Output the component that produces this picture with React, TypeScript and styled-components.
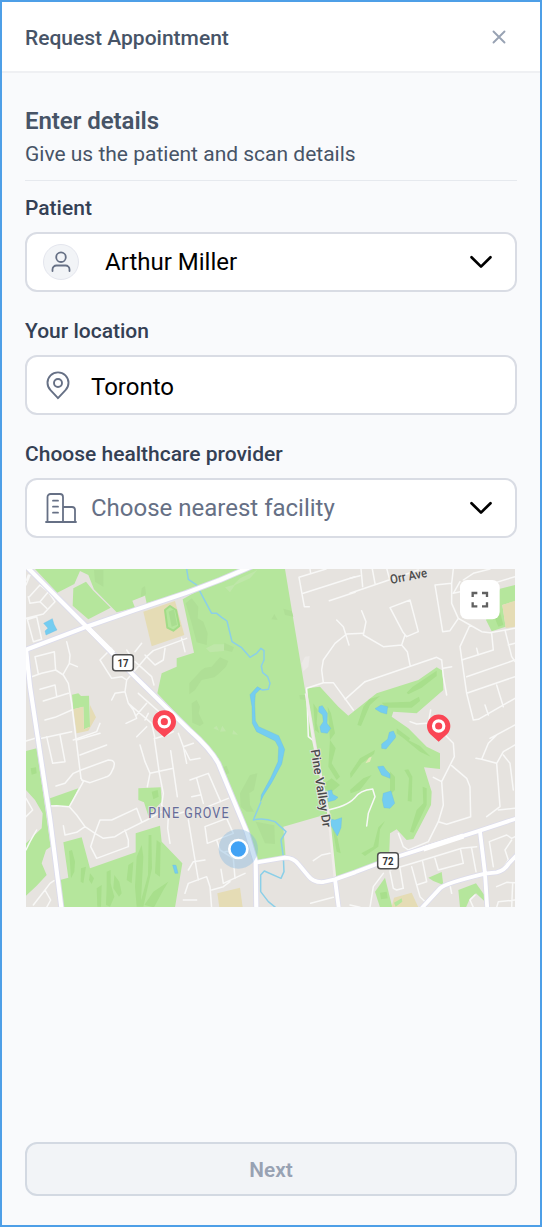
import React from 'react';
import styled, { createGlobalStyle } from 'styled-components';

const GlobalStyle = createGlobalStyle`
  * { box-sizing: border-box; }
  body { margin: 0; font-family: Roboto, "Liberation Sans", sans-serif; }
`;

const Dialog = styled.main`
  display: flex;
  flex-direction: column;
  width: 542px;
  height: 1227px;
  border: 2px solid #4e9fe7;
  background: #f9fafc;
`;

const Header = styled.header`
  display: flex;
  align-items: center;
  justify-content: space-between;
  height: 71px;
  padding: 1px 34px 0 23px;
  border-bottom: 2px solid #eff0f3;
  background: #fff;
`;

const Title = styled.h1`
  margin: 1px 0 0;
  font-size: 21px;
  line-height: 24px;
  font-weight: 500;
  color: #475467;
`;

const IconButton = styled.button`
  display: flex;
  padding: 0;
  border: 0;
  background: none;
`;

const Body = styled.section`
  display: flex;
  flex: 1;
  flex-direction: column;
  padding: 34px 23px 29px;
`;

const Intro = styled.div`
  height: 74px;
  border-bottom: 1px solid #e6e9ee;
`;

const Heading = styled.h2`
  margin: 0;
  font-size: 24px;
  line-height: 28px;
  font-weight: 600;
  letter-spacing: -0.05px;
  color: #475467;
`;

const Lead = styled.p`
  margin: 6px 0 0;
  font-size: 21px;
  line-height: 26px;
  color: #475467;
`;

const Form = styled.form`
  display: flex;
  flex-direction: column;
  gap: 27px;
  margin-top: 15px;
`;

const FieldGroup = styled.div`
  display: flex;
  flex-direction: column;
  gap: 12px;
`;

const Label = styled.span`
  font-size: 21px;
  line-height: 24px;
  font-weight: 500;
  color: #344054;
`;

const Field = styled.div`
  display: flex;
  align-items: center;
  height: 60px;
  padding: 0 22px 0 16px;
  border: 2px solid #d9dce4;
  border-radius: 12px;
  background: #fff;
`;

const Avatar = styled.span`
  display: flex;
  align-items: center;
  justify-content: center;
  width: 36px;
  height: 36px;
  border: 1px solid #e4e6ee;
  border-radius: 50%;
  background: #f2f4f7;
`;

const IconSlot = styled.span<{ $inset: number; $width: number; $drop?: number }>`
  display: flex;
  width: ${(p) => p.$width}px;
  padding-left: ${(p) => p.$inset}px;
  padding-top: ${(p) => p.$drop ?? 0}px;
`;

const Value = styled.span<{ $gap: number; $muted?: boolean; $drop?: number }>`
  flex: 1;
  margin-left: ${(p) => p.$gap}px;
  padding-top: ${(p) => p.$drop ?? 0}px;
  font-size: 24px;
  line-height: 30px;
  color: ${(p) => (p.$muted ? '#667085' : '#000')};
`;

const MapFrame = styled.div`
  width: 489px;
  height: 338px;
  margin: 31px 0 0 1px;
  svg { display: block; overflow: visible; }
`;

const NextButton = styled.button`
  height: 54px;
  margin-top: auto;
  padding: 1px 0 0;
  border: 2px solid #d3d9e2;
  border-radius: 12px;
  background: #f2f4f7;
  font: 600 20.8px/24px Roboto, "Liberation Sans", sans-serif;
  color: #98a2b3;
`;

const Chevron = () => (
  <svg width="24" height="16" viewBox="0 0 24 16" fill="none" stroke="#000" strokeWidth="2.7" strokeLinecap="round" strokeLinejoin="round">
    <path d="M2.500 3.200 12 12.600l9.500-9.400" />
  </svg>
);

const PersonIcon = () => (
  <svg width="20" height="22" viewBox="0 0 20 22" fill="none" stroke="#667085" strokeWidth="1.800" strokeLinecap="round">
    <circle cx="10" cy="6.200" r="4.800" />
    <path d="M1.500 20v-1.500a4 4 0 0 1 4-4h9a4 4 0 0 1 4 4V20" />
  </svg>
);

const PinIcon = () => (
  <svg width="24" height="30" viewBox="0 0 24 30" fill="none" stroke="#667085" strokeWidth="1.900">
    <path d="M12 27.200 4.500 19.200A10.500 10.500 0 1 1 19.500 19.200Z" strokeLinejoin="round" />
    <circle cx="12" cy="12" r="4" />
  </svg>
);

const BuildingIcon = () => (
  <svg width="32" height="32" viewBox="0 0 32 32" fill="none" stroke="#667085" strokeWidth="1.800" strokeLinecap="round">
    <path d="M1 30h30M2.500 30V5a3 3 0 0 1 3-3h9.500a3 3 0 0 1 3 3v25M18 15h9a3 3 0 0 1 3 3v12M8 8.700h5M8 14.700h5M8 20.700h5" />
  </svg>
);

/* Map geometry, three units to a pixel */
const grass = [
  'M45 27 112 98 163 72 180 33 205 45 222 88 290 157 345 143 337 122 375 107 380 130 510 90 685 27Z',
  'M160 85 198 65 220 92 272 143 205 178 158 137Z',
  'M488 118 600 55 685 27H795L880 540 930 760 790 800 797 893 707 906 675 815 595 595 510 505 412 400 425 340 470 320 470 295 522 278 495 150Z',
  'M860 385 900 380 955 440 985 467 1070 400 1195 360 1250 322 1268 332 1270 390 1190 460 1120 455 1115 470 1165 505 1220 560 1260 580V627L1212 622 1235 695 1233 735 1180 837 1160 840 1130 808 1110 820 1107 900 990 937 945 950 925 757Z',
  'M1398 180 1440 86 1485 75V124L1447 135 1457 200 1415 214Z',
  'M156 404 175 400 183 408 207 407 210 500 192 508 190 440 160 448Z',
  'M18 573 50 565 92 860 78 870 65 910 80 945 50 977 18 1007V850L65 805 68 760 45 720 18 690Z',
  'M90 715 175 685 148 740 90 737Z',
  'M355 685 422 682 425 725 385 768 372 727 355 720Z',
  'M130 847 185 832 210 925 347 877V820L420 797 425 845 487 910 465 1042H130L120 960 145 953Z',
  'M1225 953 1265 936 1270 975 1240 963Z',
  'M1315 990 1368 970 1395 1008 1400 1030 1368 1000 1350 1015 1338 1042H1320Z',
  'M1095 953 1065 995 1080 1042H1117Z',
];
const sand = [
  'M370 155 465 123 493 225 395 259Z',
  'M160 448 190 440 192 508 210 500V435L228 472 205 512 170 520Z',
  'M1447 135 1485 122V200L1457 204Z',
  'M592 1000 660 983 668 1042H598Z',
  'M1122 1013 1175 998 1195 1042H1115Z',
];
const shade = [
  'M497 130 515 115 535 140 533 175 550 185 563 220 560 255 530 247 515 190Z',
  'M508 370 545 330 555 323 575 320 600 292 625 303 618 320 595 342 583 352 545 360 525 390 508 403Z',
  'M515 430 530 420 540 440 536 460 551 490 540 498 517 488Z',
  'M613 248 642 262 636 276 612 270ZM754 178 763 162 773 180ZM790 146 815 153 820 170 795 165ZM838 405H855L858 420 840 418Z',
  'M660 700 690 645 712 640 702 690 688 700 690 735 702 755 680 755 662 740Z',
  'M707 785 763 796 765 852 735 850Z',
  'M606 623 620 617 628 640 610 645Z',
  'M222 30H250V80L225 65ZM365 85 375 78 378 103 362 112Z',
];
const fairways = [
  'M1160 398 1178 380 1250 332 1250 348 1205 383 1165 403Z',
  'M1012 495 1030 440 1048 417 1080 408 1050 435 1023 498Z',
  'M1085 428 1170 425 1197 410 1200 423 1175 443 1100 443Z',
  'M1130 505 1170 535 1165 545 1130 520ZM1145 530 1200 558 1232 590 1200 575Z',
  'M990 640 1020 595 1065 570 1062 582 1025 610 992 655ZM990 690 1030 655 1055 645 1020 690 992 700Z',
  'M1153 630 1165 628 1177 650 1175 725 1163 723 1167 655Z',
  'M1208 680 1220 685 1220 735 1180 818 1170 815 1190 750 1210 730Z',
  'M1024 880 1060 860 1075 802 1095 783 1080 808 1075 860 1035 888Z',
  'M880 430 893 450 890 490 898 520 885 510ZM923 440 933 460 945 520 930 540 927 500Z',
  'M1110 635 1125 650 1125 690 1110 705Z',
  'M930 540 947 565 935 610 960 650 950 660 925 620ZM905 675 935 655 960 675 930 700Z',
  'M938 805 952 830 962 880 950 875Z',
  'M147 873 156 870 165 905 163 935 153 955 150 910ZM183 925 198 920 190 970 182 965Z',
  'M210 940 222 955 215 972 207 960ZM230 985 245 975 243 1040H232ZM260 935 272 930 272 970 283 1010 270 1040 258 1035 260 980Z',
  'M283 945 298 965 305 1000 297 1010 280 985ZM325 915 340 905 335 970 320 960Z',
  'M350 890 365 855 370 890 362 1040H350L345 980ZM386 825 394 825 396 925 370 1040H358L384 945ZM410 840 422 850 420 950 405 940Z',
  'M373 1035 400 995 445 965 430 990 402 1042ZM32 625 48 622 50 640 35 644ZM395 695 413 690 416 710 400 718Z',
  'M1080 998 1100 995 1103 1015 1083 1018ZM1423 170 1440 155 1450 195 1435 200Z',
];
const paleGrass = [
  'M558 265 582 253H612V273L570 277ZM615 82 640 75 660 55 712 30 690 55 645 75 630 97ZM580 505 590 497 597 512ZM600 515 607 497 618 514ZM637 523 640 510 654 524Z',
];
const water = [
  'M71 190 97 176 102 193 111 210 78 225 75 213 84 205Z',
  'M897 440 907 437 922 460 921 490 932 505 922 520 903 517 900 500 910 485 908 465 896 455Z',
  'M1065 446 1083 435 1103 440 1100 462 1082 457Z',
  'M1108 517 1120 513 1127 528 1126 533 1098 567 1085 565 1085 552 1103 538Z',
  'M1073 620 1090 618 1098 630 1110 642V655L1085 645ZM1090 700 1113 693 1124 730 1110 745 1092 743 1087 720Z',
  'M922 693 935 690 938 703 954 712 945 720 925 725ZM930 777 945 780 965 773 963 803 952 828 934 798Z',
  'M458 915 468 916 474 940 465 940Z',
  'M712 380 722 386 706 402 704 430 706 482 716 500 776 527 794 568 785 612 755 668 730 707 722 724 724 705 753 652 774 605 776 562 766 543 710 515 697 490 696 440 690 404Z',
];
const stream =
  'M500 27 505 58 530 75 548 110 575 160H590L605 172 621 183 636 245 665 263 690 292 710 280 723 265 732 272V300L724 318 728 338 743 350 750 370 745 388 728 390 712 384M723 725 700 780Q730 772 765 785L798 815 783 840 790 890 792 935 783 955 733 933 722 945V995L745 1025 770 1045';
const streets = [
  'M25 45 20 60M28 110 60 75 85 95 60 125M85 95 105 125 70 162 18 175M25 110 30 130 60 125 80 145M22 178 40 245 65 238 50 170 25 178M18 75 30 45',
  'M140 245 150 285 148 310 172 320M148 310 130 342M45 290 103 275 107 330 65 340 35 350M45 290 55 342M107 330 130 345 145 370 155 430 168 535 183 655M60 388 105 375 110 408M70 423 145 400M75 480 105 472 155 450M65 535 155 515M160 540 230 515 240 490',
  'M275 265 240 300 275 355 305 350 320 360 380 290 400 272 500 235M365 250 345 275M375 285 405 315 430 300 435 265M485 235 495 275M345 305 395 350 402 375M320 270 330 285M320 360 315 395 325 430 395 490 405 535M315 395 285 400 275 420M325 430 340 450 350 475 318 490M355 400 445 480M380 430 350 465M380 500 350 530',
  'M430 530 460 515M375 480 385 460M360 555 375 605 390 640 382 680M390 640 460 625M403 535 418 640 430 700 425 735M408 535 440 525M452 572 472 710M475 520 490 560 500 610M490 560 520 550',
  'M18 543 60 530M18 715 38 750 18 770M50 810 30 845 18 870M80 530 98 610 135 605 120 525M170 540 240 520M180 585 260 555M108 678 135 670 160 640 183 630 265 600Q295 600 275 635Q270 648 255 652L210 668 185 660M183 655 190 665 148 740 170 765 195 800 225 820 250 835 285 830 310 815 380 780 425 755 442 760M90 738 110 737 148 740M225 820 240 780 275 780 350 745 365 785M225 820 212 860 230 895 325 860V840L315 810M130 797 135 825 170 817 195 800M425 735 445 770 443 805 450 850M460 765 495 755M40 1035 75 990 90 970 102 962M75 990 92 1020 80 1042',
  'M495 570 510 600 540 595M510 660 565 640 602 725M515 710 540 705M530 655 550 730M550 745 625 715M555 800 562 850 640 820M555 800 620 775 640 820M590 840 600 870 640 895 645 955M495 1000 505 970 560 950 570 980 575 1045M505 930 520 905 555 900M505 780 535 960M603 928 610 970 675 940M575 990 610 980 630 965M490 1020H530M615 875 650 870',
  'M870 27 872 40M918 27 837 52 853 140H868M850 100 1005 50M928 122 1005 97M950 180 970 200 987 255M1030 220 980 222 945 250 910 300 905 330 910 368 860 385 865 530 880 542M910 368H940L1000 450M975 418 1035 365',
  'M990 100 1195 30M1023 27 1028 80M1057 27 1065 70M1100 25 1108 55M990 55 1020 47M1300 27 1295 70 1245 75 1268 215 1290 212 1315 175 1295 130V70M1110 143 1170 120 1195 215 1160 230 1148 215 1110 143M1155 225 1145 255 1090 260 1030 225 1038 185 1025 152M1145 255 1162 275 1170 315M1035 365 1250 292 1265 300 1270 350 1280 405M1270 325 1295 320M1315 175 1350 195 1385 215 1410 218 1485 205M1350 195 1320 260 1340 400 1360 480 1375 478 1485 415M1325 300 1420 270 1415 220M1340 350 1485 300M1340 400 1485 350M1455 210 1475 290 1485 305M1430 375 1450 440M1370 265 1375 285M1395 435 1405 465M1465 255 1485 250M1300 100 1370 85 1485 50M1330 60 1360 40 1410 27M1320 65 1300 100',
  'M1170 485 1190 492 1220 490M1225 490 1232 450M1270 520 1300 550 1303 590 1265 665 1270 735 1255 785 1225 845 1165 870 1150 860 1135 820M1240 652 1265 665M1295 617 1340 655 1350 680 1352 770 1280 793 1255 785M1430 525 1405 550 1385 598 1368 595M1385 598 1430 610 1440 740 1400 770M1430 610 1450 575 1485 555M1450 585 1470 610 1480 690M1435 750 1485 745M1410 535 1485 495',
  'M915 752Q980 740 1003 715 1020 690 1058 687L1065 710 1045 760 1040 798M880 902 905 885 930 880M872 1030 940 1012M1110 930 1210 900 1325 865 1370 860M1110 935 1120 985 1130 990 1150 985 1140 925M1175 920 1190 975 1220 965 1208 905M1245 895 1255 930 1330 910 1322 870M1355 865 1368 935M1190 975 1200 1010 1220 1030M1090 940 1060 980 1050 1042M1408 845 1460 825 1475 835 1485 830M1408 845 1420 920M1450 925 1465 900 1455 870 1475 840M1430 980 1460 967 1485 968M1360 1042 1350 1020 1365 1005M1430 1042 1435 1025 1485 1020M1478 970 1475 1042M1290 975 1295 1000M990 1035 1020 1042',
];
const mainRoads = [
  'M18 18 200 200 330 335 510 512Q570 565 595 610L628 690 680 815 707 905 709 1050',
  'M10 272 200 200 345 150 495 100 600 60 700 17',
  'M18 268 30 380 52 525 90 775 125 1050',
];
const lesserRoads = [
  'M707 908 795 893Q820 893 835 912L865 948Q880 968 910 966L945 958 1005 937 1110 897 1210 865 1370 815 1500 772',
  'M945 958 957 1050M1380 815 1395 940 1402 1050M1200 1050 1260 985Q1275 970 1395 941L1430 937Q1455 930 1465 912L1500 875',
];

const RouteBadge = ({ x, y, label }: { x: number; y: number; label: string }) => (
  <g>
    <rect x={x - 31} y={y - 24} width="62" height="48" rx="9" fill="#fff" stroke="#505050" strokeWidth="4.500" />
    <text x={x} y={y + 12} textAnchor="middle" fontSize="34" fontWeight="700" fill="#333" textLength="33" lengthAdjust="spacingAndGlyphs">{label}</text>
  </g>
);

const FacilityPin = ({ x, y }: { x: number; y: number }) => (
  <g transform={`translate(${x} ${y})`}>
    <path d="M0 47-25 25A35 35 0 1 1 25 25Z" fill="#fa4655" />
    <circle r="15.500" fill="#fa4655" stroke="#fff" strokeWidth="9.500" />
  </g>
);

const FacilityMap = () => (
  <svg width="489" height="338" viewBox="18 27 1467 1014" fontFamily="Roboto, sans-serif">
    <clipPath id="map-bounds"><rect x="18" y="27" width="1467" height="1014" /></clipPath>
    <g clipPath="url(#map-bounds)">
      <rect x="18" y="27" width="1467" height="1014" fill="#e6e3df" />
      <g fill="#b5e69c">{grass.map((d) => <path key={d} d={d} />)}</g>
      <g fill="#e5dcb5">{sand.map((d) => <path key={d} d={d} />)}</g>
      <path d="M435 150 450 138 468 150 478 198 460 212 442 203Z" fill="#b5e69c" stroke="#a2dc87" strokeWidth="6" strokeLinejoin="round" />
      <path d="M446 155 462 148 471 194 455 200Z" fill="#a9dd90" />
      <path d="M1122 1028 1145 1015 1147 1025 1127 1040Z" fill="#b5e69c" />
      <g fill="#afdf96">{shade.map((d) => <path key={d} d={d} />)}</g>
      <g fill="#a8df8c">{fairways.map((d) => <path key={d} d={d} />)}</g>
      <g fill="#bfe7a9">{paleGrass.map((d) => <path key={d} d={d} />)}</g>
      <path d="M845 310 855 290 869 288 865 320 850 334Z" fill="#ece9e7" />
      <path d="M1036 610 1047 593 1055 590 1050 605Z" fill="#e5e8ba" />
      <path d={stream} fill="none" stroke="#8bcfe8" strokeWidth="4.500" strokeLinejoin="round" />
      <g fill="#74cdf1" stroke="#65b9e5" strokeWidth="1">{water.map((d) => <path key={d} d={d} />)}</g>
      <g fill="none" stroke="#f8f8f7" strokeWidth="4.500" strokeLinecap="round" strokeLinejoin="round">
        {streets.map((d) => <path key={d} d={d} />)}
      </g>
      <path d="M858 400 880 540 925 757 945 955" fill="none" stroke="#f0ece9" strokeWidth="8" />
      <g fill="none" strokeLinejoin="round">
        <g stroke="#dcdcec" strokeWidth="18">{mainRoads.map((d) => <path key={d} d={d} />)}</g>
        <g stroke="#dcdcec" strokeWidth="16">{lesserRoads.map((d) => <path key={d} d={d} />)}</g>
        <g stroke="#fff" strokeWidth="12.500">{mainRoads.map((d) => <path key={d} d={d} />)}</g>
        <g stroke="#fff" strokeWidth="11.500">{lesserRoads.map((d) => <path key={d} d={d} />)}</g>
      </g>
      <path d="M200 200 280 280M1210 867 1330 828" fill="none" stroke="#fff" strokeWidth="15" />
    </g>
    <g stroke="#e9e7e4" strokeWidth="5" paintOrder="stroke" fill="#4b4b4b">
      <text transform="translate(1113 72) rotate(-11)" fontSize="38" fontWeight="500" textLength="112" lengthAdjust="spacingAndGlyphs">Orr Ave</text>
      <text transform="translate(872 570) rotate(81)" fontSize="37" fontWeight="500" textLength="236" lengthAdjust="spacingAndGlyphs">Pine Valley Dr</text>
    </g>
    <g fontSize="46" fill="#656b98" stroke="#e9e7e4" strokeWidth="5" paintOrder="stroke" letterSpacing="4">
      <text x="385" y="774" textLength="244" lengthAdjust="spacingAndGlyphs">PINE GROVE</text>
    </g>
    <RouteBadge x={309} y={308} label="17" />
    <RouteBadge x={1104} y={902} label="72" />
    <FacilityPin x={433} y={485} />
    <FacilityPin x={1256} y={498} />
    <circle cx="655" cy="867" r="59" fill="#82b6e2" fillOpacity=".4" />
    <circle cx="655" cy="867" r="27" fill="#40a2f5" stroke="#fff" strokeWidth="8" />
    <rect x="1320" y="60" width="119" height="118" rx="22" fill="#fff" />
    <path d="M1358 111V99H1372M1386 99H1401V111M1401 127V139H1386M1372 139H1358V127" fill="none" stroke="#616161" strokeWidth="7" />
  </svg>
);

export default function App() {
  return (
    <>
      <GlobalStyle />
      <Dialog>
        <Header>
          <Title>Request Appointment</Title>
          <IconButton aria-label="Close">
            <svg width="14" height="14" viewBox="0 0 14 14" stroke="#98a2b3" strokeWidth="1.900" strokeLinecap="round">
              <path d="m1.500 1.500 11 11m0-11-11 11" />
            </svg>
          </IconButton>
        </Header>
        <Body>
          <Intro>
            <Heading>Enter details</Heading>
            <Lead>Give us the patient and scan details</Lead>
          </Intro>
          <Form>
            <FieldGroup>
              <Label>Patient</Label>
              <Field>
                <Avatar><PersonIcon /></Avatar>
                <Value $gap={26}>Arthur Miller</Value>
                <Chevron />
              </Field>
            </FieldGroup>
            <FieldGroup>
              <Label>Your location</Label>
              <Field>
                <IconSlot $inset={3} $width={30} $drop={1}><PinIcon /></IconSlot>
                <Value $gap={18} $drop={3}>Toronto</Value>
              </Field>
            </FieldGroup>
            <FieldGroup>
              <Label>Choose healthcare provider</Label>
              <Field>
                <IconSlot $inset={2} $width={34}><BuildingIcon /></IconSlot>
                <Value $gap={14} $muted>Choose nearest facility</Value>
                <Chevron />
              </Field>
            </FieldGroup>
          </Form>
          <MapFrame><FacilityMap /></MapFrame>
          <NextButton>Next</NextButton>
        </Body>
      </Dialog>
    </>
  );
}
